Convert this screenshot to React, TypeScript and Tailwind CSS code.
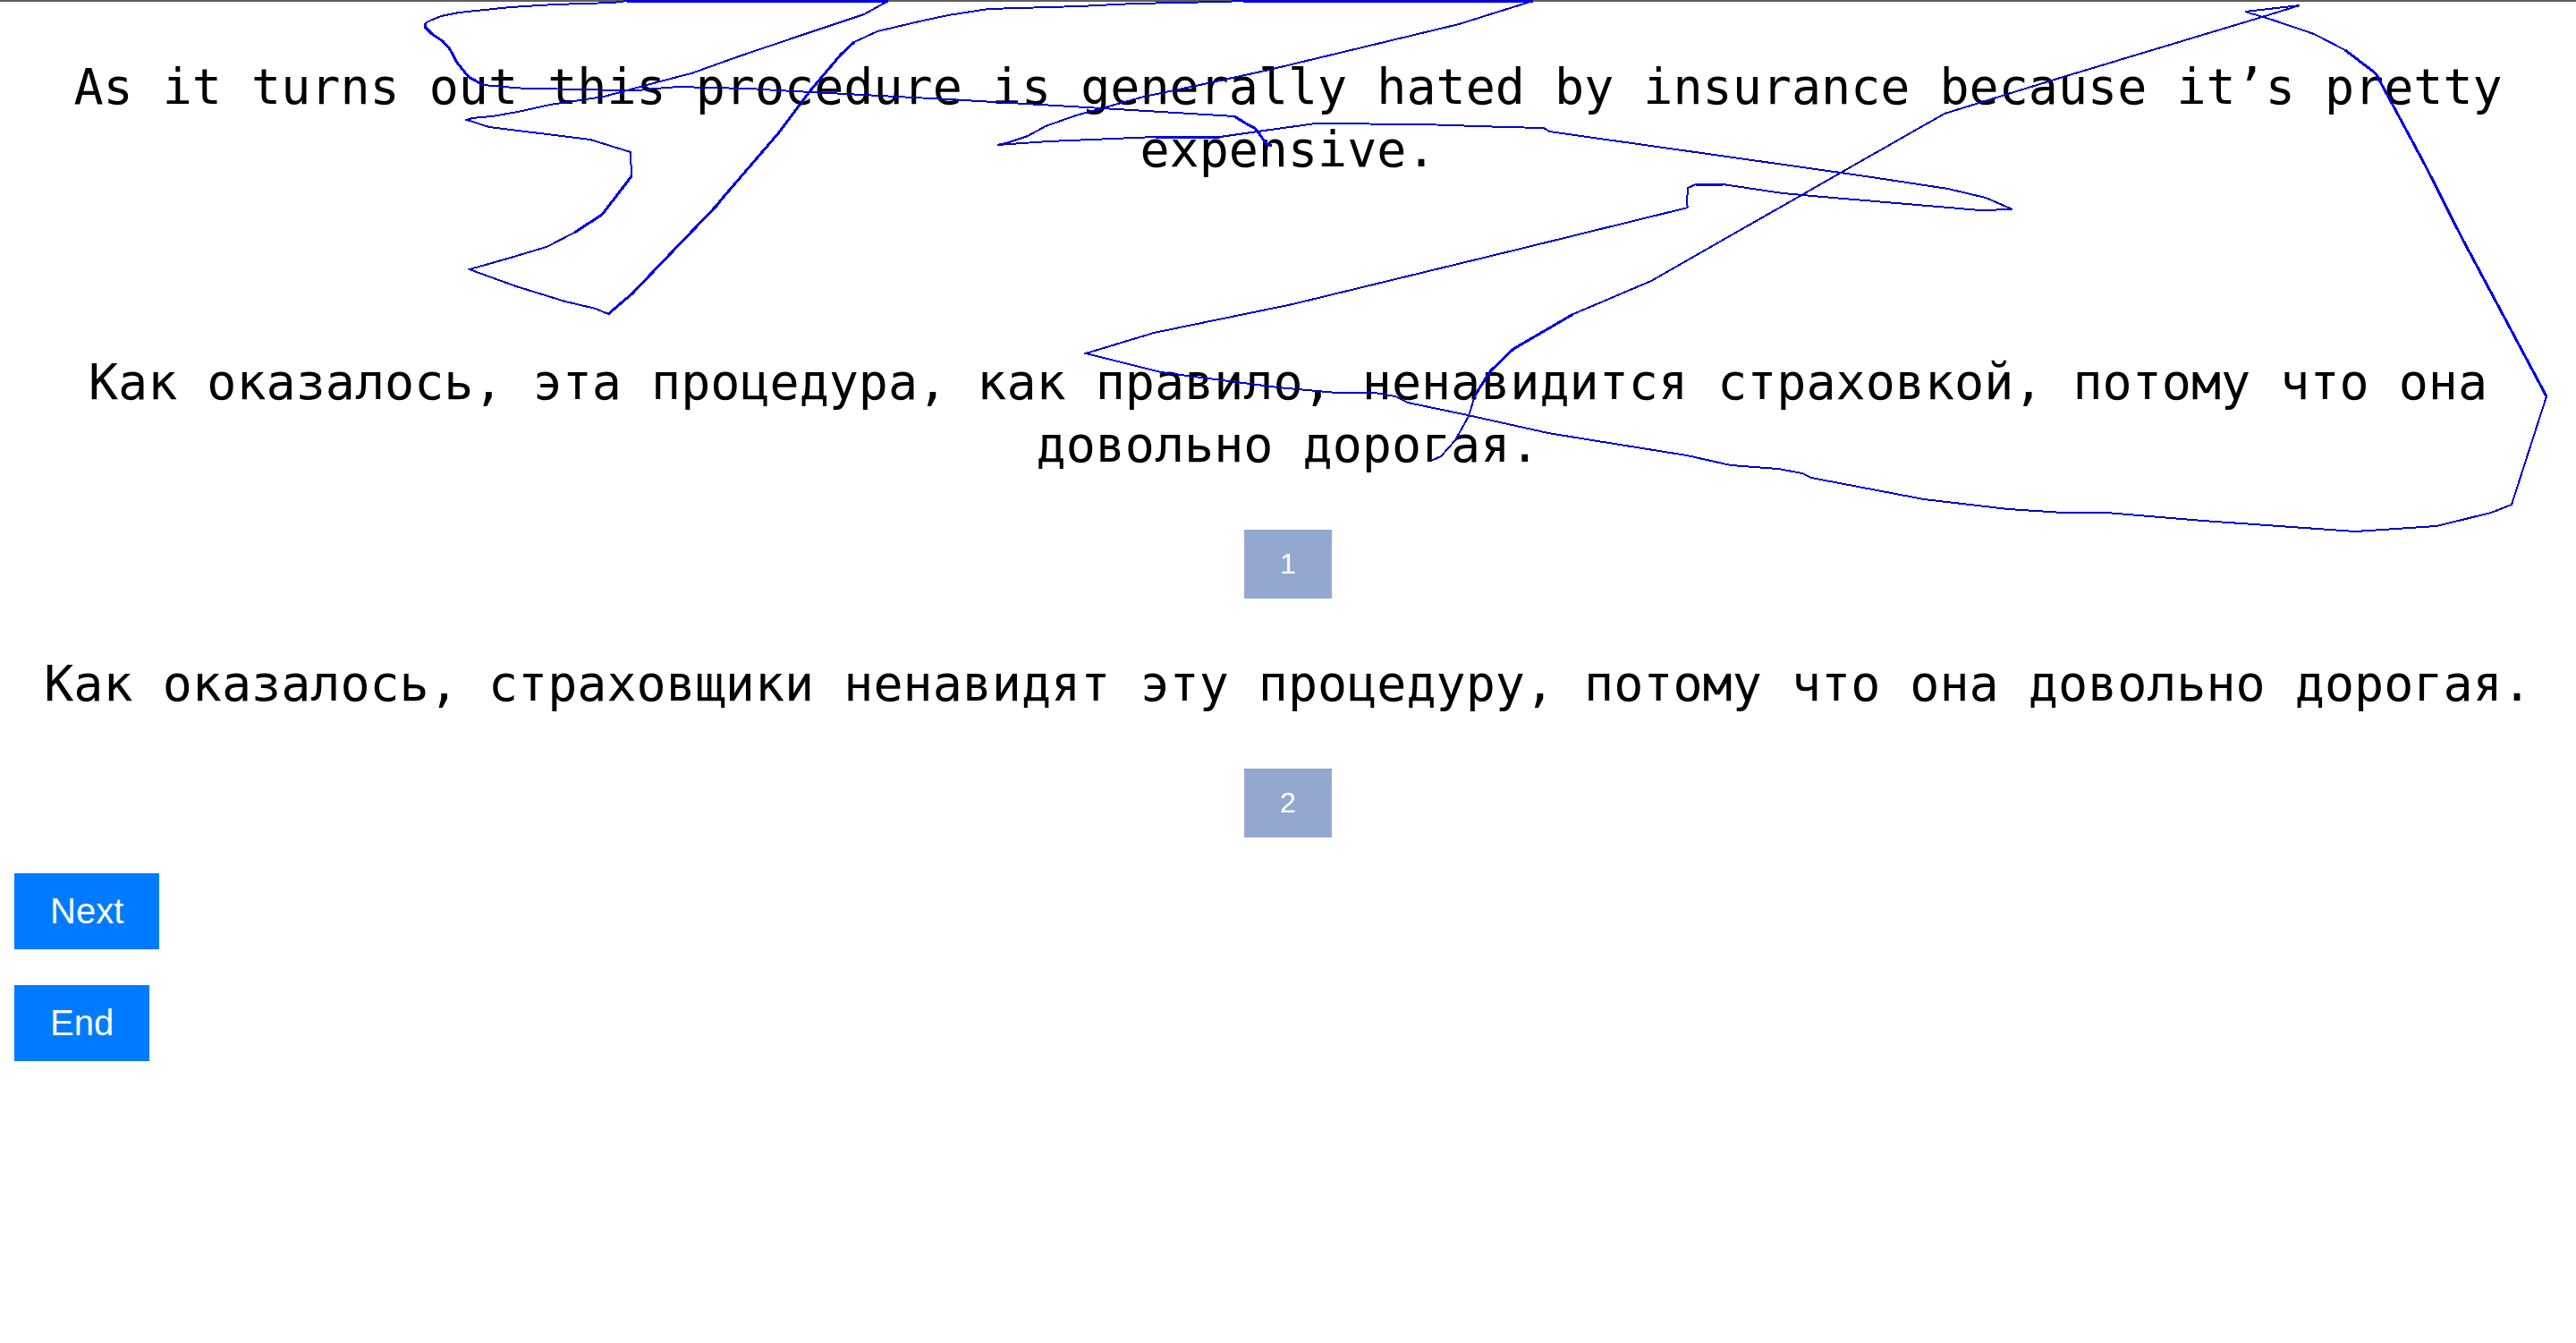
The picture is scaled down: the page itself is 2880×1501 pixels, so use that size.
import React from "react";

const THIN_STROKES = [
  "1380,130 1364,129 1232,121 1060,111 869,101 838,99 791,98 760,97 744,98 713,101 685,101 656,100 589,99 575,98 540,95",
  "475,26 481,23 493,18 513,14 571,8 620,5 685,3 701,1 993,1",
  "993,1 966,16 897,39 826,63 773,82 738,91 701,101 675,108 615,117 579,125 550,130 528,132 522,134 547,142 660,156 705,170 706,197",
  "642,260 611,276 571,288 525,301 530,303 577,320 632,337 666,345 680,351",
  "955,47 981,35 1032,23 1060,17 1105,10 1207,7 1268,4 1364,2 1390,1 1714,1",
  "1714,1 1631,27 1419,78 1346,94 1279,108 1232,121 1203,129 1169,141 1149,152 1125,160 1115,162 1172,158 1292,153 1364,153 1413,146 1471,138 1591,139 1683,142 1725,143 1728,144 1732,147",
  "1732,147 2058,193 2099,199 2178,211 2220,221 2250,234 2214,235 2026,219 1993,216 1933,207 1926,206 1896,206 1887,210 1886,227 1887,232",
  "1887,232 1700,278 1445,340 1348,360 1290,372 1214,395 1298,416 1343,422 1429,433 1494,439 1537,439 1560,443 1574,450 1641,464 1731,484 1780,492 1886,509 1935,520 1988,524 2015,529 2025,534",
  "2025,534 2151,558 2245,569 2307,573 2355,573 2463,582 2633,594 2724,588 2785,573 2808,564 2847,443",
  "2622,56 2587,38 2540,22 2510,13 2571,6",
  "2571,6 2529,19 2300,88 2174,127 2058,193 1846,314 1759,351",
  "1649,442 1642,465 1627,492 1611,510 1600,515",
];

const HEAVY_STROKES = [
  "1422,163 1416,161 1406,147 1404,144 1393,138 1380,130",
  "540,95 524,86 511,70 503,55 495,46 483,38 475,30 475,26",
  "701,1 993,1",
  "1390,1 1714,1",
  "706,197 673,240 642,260",
  "680,351 707,328 750,283 801,230 809,220 871,148 907,100 940,61 955,47",
  "2847,443 2807,368 2753,267 2711,184 2675,117 2656,82 2622,56",
  "1759,351 1692,390 1666,415 1649,442",
  "1292,153 1364,153",
  "1896,206 1926,206",
];

function PointerTrace() {
  return (
    <svg
      className="pointer-events-none w-full"
      viewBox="0 0 2880 600"
      fill="none"
      shapeRendering="crispEdges"
      aria-hidden="true"
    >
      <g stroke="#0000d0" strokeWidth="2">
        {THIN_STROKES.map((points) => (
          <polyline key={points} points={points} />
        ))}
      </g>
      <g stroke="#0000e6" strokeWidth="3">
        {HEAVY_STROKES.map((points) => (
          <polyline key={points} points={points} />
        ))}
      </g>
    </svg>
  );
}

function Sentence({ children }: { children: React.ReactNode }) {
  return (
    <p className="text-center font-['DejaVu_Sans_Mono',monospace] text-[55px] leading-[70px]">
      {children}
    </p>
  );
}

function ChoiceButton({ children }: { children: React.ReactNode }) {
  return (
    <button
      type="button"
      className="self-center bg-[#94a7d1] px-10 py-5 text-[32px] leading-[37px] text-white"
    >
      {children}
    </button>
  );
}

function ActionButton({ children }: { children: React.ReactNode }) {
  return (
    <button
      type="button"
      className="bg-[#007bff] px-10 py-5 text-[40px] leading-[45px] text-white"
    >
      {children}
    </button>
  );
}

export default function App() {
  return (
    <main className="relative min-h-screen border-t-2 border-[#605e5e] bg-white px-4 font-['Liberation_Sans',Arial,sans-serif] text-black">
      <div className="flex flex-col gap-[60px] pt-[60px]">
        <div className="pb-[130px]">
          <Sentence>
            As it turns out this procedure is generally hated by insurance
            because it’s pretty expensive.
          </Sentence>
        </div>
        <Sentence>
          Как оказалось, эта процедура, как правило, ненавидится страховкой,
          потому что она довольно дорогая.
        </Sentence>
        <ChoiceButton>1</ChoiceButton>
        <Sentence>
          Как оказалось, страховщики ненавидят эту процедуру, потому что она
          довольно дорогая.
        </Sentence>
        <ChoiceButton>2</ChoiceButton>
      </div>
      <div className="flex flex-col items-start gap-10 py-10">
        <ActionButton>Next</ActionButton>
        <ActionButton>End</ActionButton>
      </div>
      <div className="pointer-events-none absolute inset-x-0 -top-0.5">
        <PointerTrace />
      </div>
    </main>
  );
}
